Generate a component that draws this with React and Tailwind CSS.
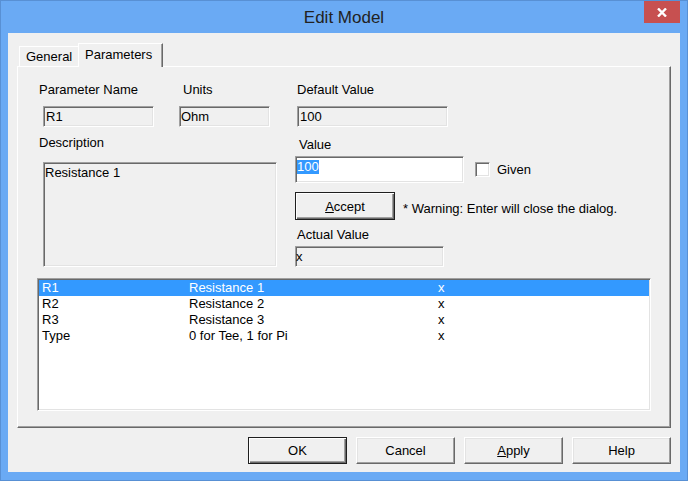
import React from 'react';

const sunken =
  'border border-t-[#a0a0a0] border-l-[#a0a0a0] border-r-white border-b-white shadow-[inset_1px_1px_0_#696969,inset_-1px_-1px_0_#e3e3e3]';
const raised =
  'border border-t-white border-l-white border-r-[#696969] border-b-[#696969] shadow-[inset_-1px_-1px_0_#a0a0a0,inset_1px_1px_0_#e3e3e3]';
const defaultBtn =
  'border border-[#1f1f1f] shadow-[inset_1px_1px_0_#ffffff,inset_-1px_-1px_0_#696969,inset_-2px_-2px_0_#a0a0a0]';

const rows = [
  ['R1', 'Resistance 1', 'x'],
  ['R2', 'Resistance 2', 'x'],
  ['R3', 'Resistance 3', 'x'],
  ['Type', '0 for Tee, 1 for Pi', 'x'],
];

const DialogButton = ({ children, isDefault }) => (
  <button
    className={`w-[99px] h-[27px] flex items-center justify-center bg-[#f0f0f0] text-[13px] text-black ${
      isDefault ? defaultBtn : raised
    }`}
  >
    {children}
  </button>
);

export default function App() {
  return (
    <div className="w-[688px] h-[481px] flex flex-col bg-[#6aaaf4] border border-[#5890d4] font-['Liberation_Sans',Arial,sans-serif] text-[13px] leading-[15px] text-black overflow-hidden">
      {/* title bar */}
      <div className="h-[32px] grid grid-cols-[1fr_auto_1fr] shrink-0">
        <div />
        <div className="pt-[7px] text-[17px] leading-[20px] text-[#222]">Edit Model</div>
        <div className="flex justify-end items-start">
          <div className="mr-[7px] w-[36px] h-[22px] bg-[#c75050] flex items-center justify-center">
            <svg width="10" height="9" viewBox="0 0 10 9">
              <path d="M1 0.5 L9 8.5 M9 0.5 L1 8.5" stroke="white" strokeWidth="2.4" />
            </svg>
          </div>
        </div>
      </div>

      {/* client */}
      <div className="mx-[7px] w-[672px] h-[439px] bg-[#f0f0f0] pt-[10px] flex flex-col">
        {/* tabs */}
        <div className="ml-[9px] flex items-start h-[24px]">
          <div className="mt-[3px] ml-[2px] w-[59px] h-[20px] border-t border-l border-t-white border-l-white flex items-center pl-[6px]">
            General
          </div>
          <div className="relative z-10 w-[85px] h-[24px] bg-[#f0f0f0] border-t border-l border-r border-t-white border-l-white border-r-[#696969] shadow-[inset_-1px_0_0_#a0a0a0] flex items-center pl-[6px] pb-[2px]">
            Parameters
          </div>
        </div>

        {/* panel */}
        <div className="ml-[9px] -mt-px w-[654px] h-[362px] border border-t-white border-l-white border-r-[#696969] border-b-[#696969] shadow-[inset_-1px_-1px_0_#a0a0a0] flex flex-col">
          <div className="mt-[15px] flex h-[15px]">
            <span className="ml-[21px] w-[144px]">Parameter Name</span>
            <span className="w-[114px]">Units</span>
            <span>Default Value</span>
          </div>
          <div className="mt-[9px] flex h-[21px]">
            <div className={`ml-[25px] w-[111px] h-[21px] flex items-center pl-[2px] ${sunken}`}>R1</div>
            <div className={`ml-[25px] w-[91px] h-[21px] flex items-center pl-[1px] ${sunken}`}>Ohm</div>
            <div className={`ml-[27px] w-[151px] h-[21px] flex items-center pl-[2px] ${sunken}`}>100</div>
          </div>

          <div className="flex">
            <div className="w-[277px] flex flex-col">
              <span className="mt-[8px] ml-[21px]">Description</span>
              <div className={`mt-[12px] ml-[25px] w-[234px] h-[105px] pt-[2px] pl-[1px] ${sunken}`}>
                Resistance 1
              </div>
            </div>
            <div className="flex flex-col">
              <span className="mt-[10px] ml-[4px]">Value</span>
              <div className="mt-[4px] flex items-center">
                <div className={`w-[169px] h-[27px] bg-white pt-[2px] pl-[1px] ${sunken}`}>
                  <span className="inline-block bg-[#3399ff] text-white leading-[14px] h-[14px]">100</span>
                </div>
                <div className={`ml-[11px] w-[15px] h-[15px] bg-white ${sunken}`} />
                <span className="ml-[7px]">Given</span>
              </div>
              <div className="mt-[9px] flex">
                <button className={`w-[100px] h-[28px] bg-[#f0f0f0] flex items-center justify-center text-[13px] ${defaultBtn}`}>
                  <span>
                    <u>A</u>ccept
                  </span>
                </button>
                <span className="ml-[8px] self-center mt-[4px]">* Warning: Enter will close the dialog.</span>
              </div>
              <span className="mt-[7px] ml-[2px]">Actual Value</span>
              <div className={`mt-[4px] w-[149px] h-[21px] flex items-center ${sunken}`}>x</div>
            </div>
          </div>

          {/* list */}
          <div className={`mt-[11px] ml-[19px] w-[614px] h-[133px] bg-white p-[1px] ${sunken}`}>
            {rows.map((r, i) => (
              <div
                key={r[0]}
                className={`h-[16px] leading-[16px] flex pl-[3px] ${i === 0 ? 'bg-[#3399ff] text-white' : 'text-black'}`}
              >
                <span className="w-[147px]">{r[0]}</span>
                <span className="w-[249px]">{r[1]}</span>
                <span>{r[2]}</span>
              </div>
            ))}
          </div>
        </div>

        {/* buttons */}
        <div className="mt-[9px] mr-[9px] flex justify-end gap-[9px]">
          <DialogButton isDefault>OK</DialogButton>
          <DialogButton>Cancel</DialogButton>
          <DialogButton>
            <span>
              <u>A</u>pply
            </span>
          </DialogButton>
          <DialogButton>Help</DialogButton>
        </div>
      </div>
    </div>
  );
}
